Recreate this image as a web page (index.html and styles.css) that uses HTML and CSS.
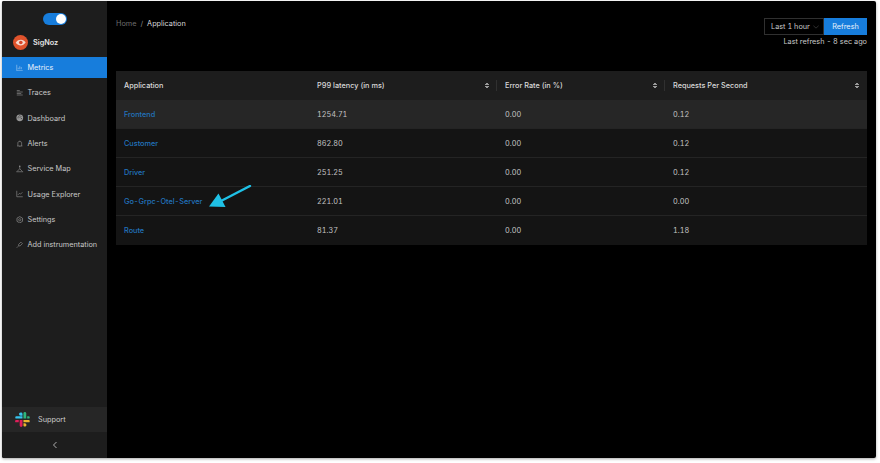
FILE: index.html
```html
<!DOCTYPE html>
<html lang="en">
<head>
    <meta charset="UTF-8">
    <meta name="viewport" content="width=device-width, initial-scale=1.0">
    <title>SigNoz - Application</title>
    <link rel="stylesheet" href="styles.css">
</head>
<body>
    <div class="app">
        <aside class="sidebar">
            <div class="toggle"><span class="toggle-knob"></span></div>
            <div class="brand">
                <svg class="brand-logo" viewBox="0 0 14 14">
                    <circle cx="7" cy="7" r="7" fill="#e0532c"/>
                    <path d="M2.500 7.200C4 5 5.500 4.400 7.400 4.400S10.600 5.300 11.800 7C10.400 9 9 9.800 7.200 9.800S4 9 2.500 7.200Z" fill="#f6d8cc"/>
                    <circle cx="7.300" cy="7" r="1.700" fill="#d8472a"/>
                </svg>
                <span class="brand-name">SigNoz</span>
            </div>
            <nav class="menu">
                <a class="menu-item active">
                    <svg class="menu-icon" viewBox="0 0 10 10"><path d="M1 1v8h8M3 7V5M5 7V3M7 7V4" fill="none" stroke="currentColor" stroke-width=".8"/></svg>
                    Metrics
                </a>
                <a class="menu-item">
                    <svg class="menu-icon" viewBox="0 0 10 10"><path d="M1 2h4M1 4h8M1 6h6M1 8h8" fill="none" stroke="currentColor" stroke-width=".8"/></svg>
                    Traces
                </a>
                <a class="menu-item">
                    <svg class="menu-icon" viewBox="0 0 10 10"><circle cx="5" cy="5" r="4.500" fill="currentColor"/><path d="M5 5 7 3M2 5h1.500M6.500 6h1.500M5 1.500v1.500M3 3 3.800 3.800" stroke="#1d1d1d" stroke-width=".8"/></svg>
                    Dashboard
                </a>
                <a class="menu-item">
                    <svg class="menu-icon" viewBox="0 0 10 10"><path d="M2.500 8V3.500Q2.500 2 5 2T7.500 3.500V8M1.500 8h7M5 .8V2M4 9.300h2" fill="none" stroke="currentColor" stroke-width=".8"/></svg>
                    Alerts
                </a>
                <a class="menu-item">
                    <svg class="menu-icon" viewBox="0 0 10 10"><path d="M5 1.500V5L1.500 8.500M5 5l3.500 3.500M.5 9h9" fill="none" stroke="currentColor" stroke-width=".8"/><circle cx="5" cy="1.500" r="1" fill="currentColor"/></svg>
                    Service Map
                </a>
                <a class="menu-item">
                    <svg class="menu-icon" viewBox="0 0 10 10"><path d="M1 1v8h8M2.500 6.500 4.500 4.500 6 5.500 8.500 3" fill="none" stroke="currentColor" stroke-width=".8"/></svg>
                    Usage Explorer
                </a>
                <a class="menu-item">
                    <svg class="menu-icon" viewBox="0 0 10 10"><path d="M5 .8 8.700 2.900V7.100L5 9.200 1.300 7.100V2.900Z" fill="none" stroke="currentColor" stroke-width=".9"/><circle cx="5" cy="5" r="1.500" fill="none" stroke="currentColor" stroke-width=".8"/></svg>
                    Settings
                </a>
                <a class="menu-item">
                    <svg class="menu-icon" viewBox="0 0 10 10"><path d="M1 9 3 7M3.500 4.500 6.500 1.500 8.500 3.500 5.500 6.500 3.500 6.500Z" fill="none" stroke="currentColor" stroke-width=".8"/></svg>
                    Add instrumentation
                </a>
            </nav>
            <div class="support">
                <svg class="support-logo" viewBox="0 0 16 16">
                    <path d="M6 .5h.5A1.500 1.500 0 0 1 8 2v2H6a1.750 1.750 0 0 1 0-3.500Z" fill="#36c5f0"/>
                    <path d="M9 1.500a1.500 1.500 0 0 1 3 0V7H9Z" fill="#2eb67d"/>
                    <path d="M13 4.500h1.500a1.250 1.250 0 0 1 0 2.500H13Z" fill="#2eb67d"/>
                    <path d="M1.500 4.500H8V7H1.500a1.250 1.250 0 0 1 0-2.500Z" fill="#36c5f0"/>
                    <path d="M9 8.500h5.500a1.250 1.250 0 0 1 0 2.500H9Z" fill="#ecb22e"/>
                    <path d="M9 12h1.500a1.750 1.750 0 0 1 0 3.500H10A1 1 0 0 1 9 14.500Z" fill="#ecb22e"/>
                    <path d="M5 8.500h3v6a1.500 1.500 0 0 1-3 0Z" fill="#e01e5a"/>
                    <path d="M1.300 8.500H4V11H1.300a1.250 1.250 0 0 1 0-2.500Z" fill="#e01e5a"/>
                </svg>
                <span>Support</span>
            </div>
            <div class="collapse">
                <svg class="collapse-icon" viewBox="0 0 6 8"><path d="M4.500 1 1.500 4 4.500 7" fill="none" stroke="currentColor" stroke-width=".9"/></svg>
            </div>
        </aside>
        <main class="content">
            <header class="topbar">
                <div class="breadcrumb">
                    <span class="crumb-muted">Home</span>
                    <span class="crumb-muted crumb-sep">/</span>
                    <span>Application</span>
                </div>
                <div class="time-controls">
                    <div class="time-row">
                        <div class="time-select">
                            Last 1 hour
                            <svg class="select-arrow" viewBox="0 0 8 5"><path d="M.5 .8 4 4 7.500 .8" fill="none" stroke="currentColor" stroke-width=".6"/></svg>
                        </div>
                        <button class="refresh">Refresh</button>
                    </div>
                    <div class="last-refresh">Last refresh - 8 sec ago</div>
                </div>
            </header>
            <div class="table-wrap">
                <table class="services">
                    <thead>
                        <tr>
                            <th class="col-app">Application</th>
                            <th class="col-latency sortable">P99 latency (in ms)</th>
                            <th class="col-error sortable">Error Rate (in %)</th>
                            <th class="col-rps sortable">Requests Per Second</th>
                        </tr>
                    </thead>
                    <tbody>
                        <tr class="hovered"><td><a>Frontend</a></td><td>1254.71</td><td>0.00</td><td>0.12</td></tr>
                        <tr><td><a>Customer</a></td><td>862.80</td><td>0.00</td><td>0.12</td></tr>
                        <tr><td><a>Driver</a></td><td>251.25</td><td>0.00</td><td>0.12</td></tr>
                        <tr><td><a>Go-Grpc-Otel-Server</a></td><td>221.01</td><td>0.00</td><td>0.00</td></tr>
                        <tr><td><a>Route</a></td><td>81.37</td><td>0.00</td><td>1.18</td></tr>
                    </tbody>
                </table>
                <svg class="callout" viewBox="0 0 44 24">
                    <path d="M41 1 12 16" stroke="#1fc1e6" stroke-width="2.400" stroke-linecap="round"/>
                    <path d="M0 21.500 9.500 8.500 16.500 22Z" fill="#1fc1e6"/>
                </svg>
            </div>
        </main>
    </div>
</body>
</html>
```
FILE: styles.css
```css
* {
    box-sizing: border-box;
}
html, body {
    height: 100%;
}
body {
    margin: 0;
    padding: 1px 4px 5px 2px;
    background-color: #fff;
    font-family: Inter, "Liberation Sans", sans-serif;
    font-size: 7.3px;
    font-variant-numeric: tabular-nums;
    color: #d9d9d9;
}
.app {
    display: flex;
    height: 100%;
    background: #000;
    box-shadow: 0 1px 3px rgba(0, 0, 0, 0.35);
    border-radius: 2px;
    overflow: hidden;
}
.sidebar {
    width: 105px;
    flex-shrink: 0;
    display: flex;
    flex-direction: column;
    background: #1d1d1d;
}
.toggle {
    width: 24px;
    height: 12px;
    margin: 12px 0 0 41px;
    padding: 1px;
    display: flex;
    justify-content: flex-end;
    background: #177ddc;
    border-radius: 6px;
}
.toggle-knob {
    width: 10px;
    height: 10px;
    background: #fff;
    border-radius: 50%;
}
.brand {
    display: flex;
    align-items: center;
    gap: 5px;
    margin: 10px 0 0 11px;
    height: 15px;
}
.brand-logo {
    width: 15px;
    height: 15px;
}
.brand-name {
    font-weight: 600;
    color: #e4e4e4;
}
.menu {
    display: flex;
    flex-direction: column;
    margin-top: 7px;
}
.menu-item {
    display: flex;
    align-items: center;
    gap: 4px;
    height: 21px;
    margin-bottom: 4.350px;
    padding-left: 14px;
    color: #c8c8c8;
}
.menu-item.active {
    background: #177ddc;
    color: #e8f1fb;
}
.menu-icon {
    width: 7.500px;
    height: 7.500px;
    flex-shrink: 0;
    opacity: 0.7;
}
.support {
    display: flex;
    align-items: center;
    gap: 8px;
    height: 25px;
    margin-top: auto;
    padding-left: 13px;
    background: #262626;
    color: #cfcfcf;
}
.support-logo {
    width: 15px;
    height: 15px;
}
.collapse {
    display: flex;
    align-items: center;
    justify-content: center;
    height: 26px;
    color: #bdbdbd;
}
.collapse-icon {
    width: 6px;
    height: 8px;
}
.content {
    flex: 1;
    min-width: 0;
    padding: 0 9px;
}
.topbar {
    display: flex;
    justify-content: space-between;
    align-items: flex-start;
    height: 70px;
    padding-top: 17px;
}
.breadcrumb {
    display: flex;
    gap: 4px;
    margin-top: 1px;
    color: #d9d9d9;
}
.crumb-muted {
    color: #6e6e6e;
}
.crumb-sep {
    color: #8a8a8a;
}
.time-controls {
    display: flex;
    flex-direction: column;
    align-items: flex-end;
}
.time-row {
    display: flex;
}
.time-select {
    display: flex;
    align-items: center;
    justify-content: space-between;
    width: 60px;
    height: 17px;
    padding: 0 4px 0 6px;
    border: 1px solid #303030;
    color: #c8c8c8;
}
.select-arrow {
    width: 6px;
    height: 4px;
    color: #666;
}
.refresh {
    width: 43px;
    height: 17px;
    padding: 0;
    border: none;
    background: #177ddc;
    color: #e8f1fb;
    font: inherit;
}
.last-refresh {
    margin-top: 2px;
    color: #c8c8c8;
}
.table-wrap {
    position: relative;
}
.services {
    width: 100%;
    border-collapse: separate;
    border-spacing: 0;
    table-layout: fixed;
}
.services th, .services td {
    height: 29px;
    padding: 0 8px;
    text-align: left;
    font-weight: 400;
    border-bottom: 1px solid #242424;
}
.services tr:last-child td {
    border-bottom: none;
}
.services th {
    position: relative;
    background: #1d1d1d;
    color: #d9d9d9;
    font-weight: 500;
    border-bottom: none;
}
.services td {
    background: #141414;
    color: #c4c4c4;
}
.services tr.hovered td {
    background: #262626;
}
.services a {
    color: #2273bd;
    font-weight: 500;
}
.col-app {
    width: 193px;
}
.col-latency {
    width: 188px;
}
.col-error {
    width: 168px;
}
.sortable::after {
    content: "";
    position: absolute;
    right: 8px;
    top: 11px;
    width: 4px;
    height: 7px;
    background:
        linear-gradient(to bottom right, transparent 50%, #9a9a9a 50%) 0 0 / 2px 3px no-repeat,
        linear-gradient(to bottom left, transparent 50%, #9a9a9a 50%) 2px 0 / 2px 3px no-repeat,
        linear-gradient(to top right, transparent 50%, #9a9a9a 50%) 0 4px / 2px 3px no-repeat,
        linear-gradient(to top left, transparent 50%, #9a9a9a 50%) 2px 4px / 2px 3px no-repeat;
}
.sortable::before {
    content: "";
    position: absolute;
    right: 0;
    top: 9px;
    height: 11px;
    border-right: 1px solid #303030;
}
.col-rps.sortable::before {
    display: none;
}
.callout {
    position: absolute;
    left: 93px;
    top: 114px;
    width: 44px;
    height: 24px;
}
```
